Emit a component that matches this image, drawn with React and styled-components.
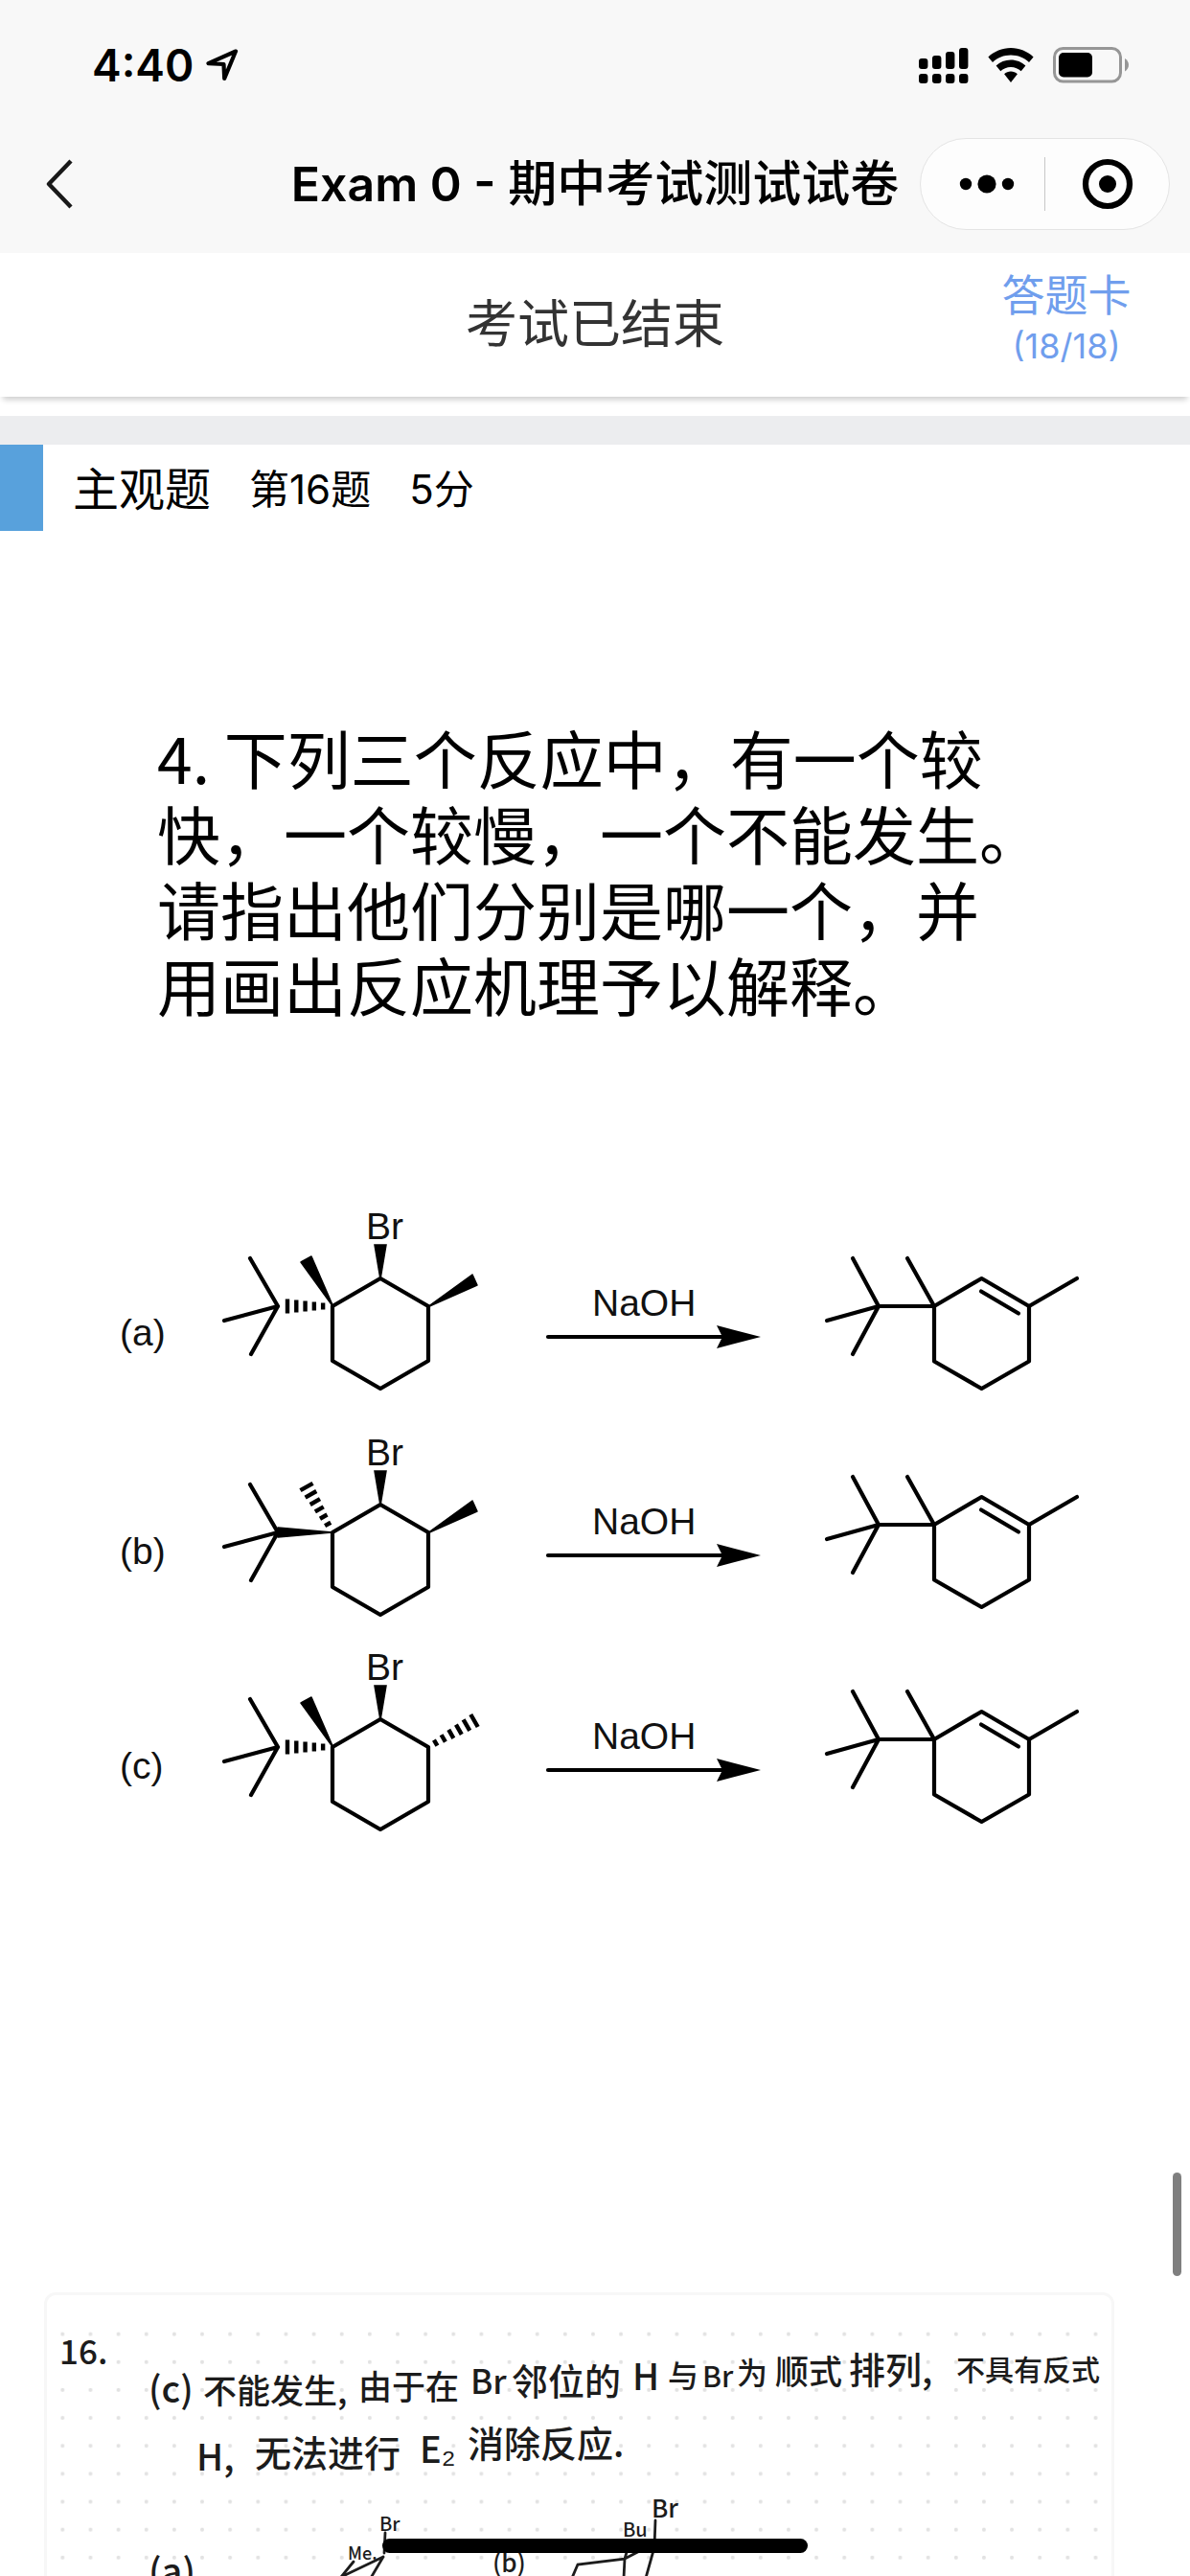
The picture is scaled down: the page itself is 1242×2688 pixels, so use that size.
import React from "react";
import styled, { createGlobalStyle } from "styled-components";

const GlobalStyle = createGlobalStyle`
  *, *::before, *::after { box-sizing: border-box; }
  body { margin: 0; background: #fff; }
  button { border: 0; padding: 0; background: none; font: inherit; color: inherit; cursor: pointer; }
  svg { display: block; }
`;

const Screen = styled.div`
  height: 100vh;
  display: flex;
  flex-direction: column;
  overflow: hidden;
  background: #fff;
  color: #000;
  font-family: Inter, "Noto Sans CJK SC", sans-serif;
`;

const TopArea = styled.header`
  flex: none;
  background: #f8f8f8;
`;

const StatusBar = styled.div`
  height: 120px;
  padding: 16px 63px 0 96px;
  display: flex;
  align-items: center;
  justify-content: space-between;
`;

const StatusGroup = styled.div`
  display: flex;
  align-items: center;
  gap: ${(p) => p.$gap}px;
`;

const Clock = styled.time`
  font-size: 46px;
  line-height: 56px;
  font-weight: 600;
`;

const NavBar = styled.nav`
  height: 144px;
  padding: 0 21px 0 48px;
  display: grid;
  grid-template-columns: 234px 1fr 261px;
  align-items: center;
`;

const BackButton = styled.button`
  width: 28px;
  height: 52px;
`;

const Title = styled.h1`
  margin: 0;
  font-size: 50px;
  line-height: 72px;
  font-weight: 600;
  text-align: center;
  white-space: nowrap;
  justify-self: center;
`;

const TitleName = styled.span`
  font-size: 51px;
  font-weight: 500;
`;

const Capsule = styled.div`
  height: 96px;
  display: flex;
  align-items: center;
  border: 1px solid #e4e4e4;
  border-radius: 48px;
  background: #fdfdfd;
`;

const CapsuleButton = styled.button`
  flex: 1 1 50%;
  display: flex;
  justify-content: center;

  &:first-child { padding-left: 8px; }
`;

const CapsuleDivider = styled.span`
  flex: none;
  width: 1px;
  height: 56px;
  background: #c8c8c8;
`;

const ExamBar = styled.section`
  flex: none;
  height: 150px;
  padding: 0 36px;
  display: grid;
  grid-template-columns: 1fr auto 1fr;
  align-items: center;
  background: #fff;
  box-shadow: 0 6px 6px -3px rgba(0, 0, 0, 0.2);
`;

const ExamState = styled.p`
  grid-column: 2;
  margin: 0;
  color: #333;
  font-size: 54px;
  line-height: 72px;
`;

const AnswerSheet = styled.button`
  justify-self: end;
  align-self: start;
  width: 186px;
  padding-top: 17px;
  display: flex;
  flex-direction: column;
  align-items: center;
  color: #709eed;
`;

const SheetLabel = styled.span`
  font-size: 45px;
  line-height: 56px;
`;

const SheetCount = styled.span`
  font-size: 36px;
  line-height: 48px;
`;

const Scroller = styled.main`
  flex: 1;
  min-height: 0;
  overflow: hidden;
  padding-top: 20px;
`;

const SectionGap = styled.div`
  height: 30px;
  background: #ecedef;
`;

const QuestionHead = styled.div`
  height: 90px;
  display: flex;
  align-items: center;
  border-left: 45px solid #58a1dc;
  padding: 4px 0 0 31px;
  gap: 40px;
`;

const Kind = styled.h2`
  margin: 0;
  font-size: 48px;
  line-height: 72px;
  font-weight: 400;
`;

const Meta = styled.span`
  font-size: 42px;
  line-height: 72px;
`;

const Prompt = styled.p`
  margin: 0;
  padding: 196px 120px 0 164px;
  font-family: "Noto Sans CJK SC", sans-serif;
  font-size: 66px;
  line-height: 79px;
  white-space: nowrap;
`;

const Figure = styled.figure`
  margin: 174px 0 0;

  svg { width: 100%; height: auto; }
`;

const AnswerCard = styled.section`
  margin: 432px 79px 0 46px;
  height: 600px;
  border: 3px solid #f7f7f7;
  border-radius: 12px;
  overflow: hidden;

  svg { width: 100%; height: auto; }
`;

const ScrollThumb = styled.div`
  position: fixed;
  right: 9px;
  top: 2267px;
  width: 9px;
  height: 108px;
  border-radius: 5px;
  background: #7f7f7f;
`;

const HomeIndicator = styled.div`
  position: fixed;
  left: 50%;
  bottom: 24px;
  width: 444px;
  height: 15px;
  margin-left: -222px;
  border-radius: 8px;
  background: #000;
`;

const LocationIcon = () => (
  <svg width="34" height="34" viewBox="0 0 34 34" fill="none" stroke="#000" strokeWidth="4.2" strokeLinejoin="round" aria-hidden="true">
    <path d="M31 2.5 L2.5 15.2 L18.5 16 L19.2 31 Z" />
  </svg>
);

const SignalIcon = () => (
  <svg width="52" height="37" viewBox="0 0 52 37" aria-hidden="true">
    {[11, 8, 4, 0].map((top, i) => (
      <g key={top}>
        <rect x={i * 14} y={top} width="9.4" height={22 - top} rx="3" />
        <rect x={i * 14} y="27" width="9.4" height="10" rx="3" />
      </g>
    ))}
  </svg>
);

const WifiIcon = () => (
  <svg width="48" height="36" viewBox="0 0 48 36" aria-hidden="true">
    <path d="M24 0 C33 0 41.500 3.600 47.600 9.400 L43 15 C38 10.300 31.300 7.600 24 7.600 C16.700 7.600 10 10.300 5 15 L.4 9.400 C6.500 3.600 15 0 24 0Z" />
    <path d="M24 12.500 C29.900 12.500 35.300 14.800 39.400 18.600 L34.700 24.200 C31.900 21.500 28.100 19.900 24 19.900 C19.900 19.900 16.100 21.500 13.300 24.200 L8.600 18.600 C12.700 14.800 18.100 12.500 24 12.500Z" />
    <path d="M24 24.600 C26.600 24.600 29 25.600 30.900 27.300 L24 36 L17.100 27.300 C19 25.600 21.400 24.600 24 24.600Z" />
  </svg>
);

const BatteryIcon = () => (
  <svg width="80" height="38" viewBox="0 0 80 38" aria-hidden="true">
    <rect x="1.500" y="1.500" width="69" height="34.500" rx="9" fill="none" stroke="#969696" strokeWidth="3" />
    <rect x="6" y="6" width="35" height="25.500" rx="5" />
    <path d="M75 12 C77.500 13.500 79 16 79 18.800 C79 21.500 77.500 24 75 25.500Z" fill="#969696" />
  </svg>
);

const BackIcon = () => (
  <svg width="28" height="52" viewBox="0 0 28 52" fill="none" stroke="#191919" strokeWidth="4.400" strokeLinejoin="round" aria-hidden="true">
    <path d="M26 2 L3 26 L26 50" />
  </svg>
);

const MoreIcon = () => (
  <svg width="58" height="20" viewBox="0 0 58 20" aria-hidden="true">
    <circle cx="7" cy="10" r="6.200" />
    <circle cx="29" cy="10" r="9.600" />
    <circle cx="51" cy="10" r="6.200" />
  </svg>
);

const TargetIcon = () => (
  <svg width="54" height="54" viewBox="0 0 54 54" aria-hidden="true">
    <circle cx="27" cy="27" r="23" fill="none" stroke="#000" strokeWidth="6.200" />
    <circle cx="27" cy="27" r="9" />
  </svg>
);

const Caption = styled.text`
  fill: #111;
  stroke: none;
  font-family: "Liberation Sans", Arial, sans-serif;
  font-size: 39px;
`;

/* Hashed bond: short bars across the line from the stereocentre outwards. */
const Hashed = ({ from, to, count, start, near, far }) => {
  const dx = to[0] - from[0];
  const dy = to[1] - from[1];
  const len = Math.hypot(dx, dy);
  const nx = -dy / len;
  const ny = dx / len;
  const bars = Array.from({ length: count }, (_, i) => {
    const k = i / (count - 1);
    const t = start + (1 - start) * k;
    const h = near + (far - near) * k;
    const x = from[0] + dx * t;
    const y = from[1] + dy * t;
    return `M${x - nx * h} ${y - ny * h}L${x + nx * h} ${y + ny * h}`;
  });
  return <path d={bars.join("")} strokeLinecap="butt" strokeWidth="4.400" />;
};

const Reactant = ({ y, butyl, methyl, tail }) => (
  <g transform={`translate(0 ${y})`}>
    <Caption x="382" y="33">Br</Caption>
    <path d="M397 74 L447 103 V160 L397 189 L347 160 V103 Z" />
    <path d="M397 75 L391 39 H403 Z" fill="#000" strokeWidth="1.500" strokeLinejoin="miter" />
    <path d="M290 103 L261 53 M290 103 L234 118 M290 103 L262 153" />
    {butyl === "hash" ? (
      <Hashed from={[347, 103]} to={[300, 103]} count={5} start={0.21} near={3.500} far={7.500} />
    ) : (
      <path d="M347 103 L290 98 V108 Z" fill="#000" strokeWidth="1.500" />
    )}
    {methyl === "hash" ? (
      <Hashed from={[347, 103]} to={[320, 55.500]} count={6} start={0.18} near={3.500} far={7.500} />
    ) : (
      <path d="M348 104 L314 57 L325 51 Z" fill="#000" strokeWidth="1.500" />
    )}
    {tail === "hash" ? (
      <Hashed from={[447, 103]} to={[495, 75.500]} count={6} start={0.16} near={3.500} far={7.500} />
    ) : (
      <path d="M446 104 L493 70 L498 81 Z" fill="#000" strokeWidth="1.500" />
    )}
  </g>
);

const ArrowAndProduct = ({ y, name }) => (
  <g transform={`translate(0 ${y})`}>
    <Caption x="125" y="144">({name})</Caption>
    <Caption x="618" y="113">NaOH</Caption>
    <path d="M572 135 H756" />
    <path d="M748 123 L794 135 L748 147 L754 135 Z" fill="#000" stroke="none" />
    <path d="M917 103 L890 53 M917 103 L863 118 M917 103 L890 153 M917 103 H975 L947 53" />
    <path d="M975 103 L1024.500 74 L1074 103 V160.500 L1024.500 189 L975 160.500 Z" />
    <path d="M1074 103 L1124 74 M1024 87.500 L1063 110.500" />
  </g>
);

const Reactions = () => (
  <svg
    viewBox="0 -20 1242 720"
    fill="none"
    stroke="#000"
    strokeWidth="4.200"
    strokeLinecap="round"
    strokeLinejoin="round"
    role="img"
    aria-label="反应 (a) (b) (c)"
  >
    <Reactant y={0} butyl="hash" methyl="wedge" tail="wedge" />
    <Reactant y={236} butyl="wedge" methyl="hash" tail="wedge" />
    <Reactant y={460} butyl="hash" methyl="wedge" tail="hash" />
    <ArrowAndProduct y={0} name="a" />
    <ArrowAndProduct y={228} name="b" />
    <ArrowAndProduct y={452} name="c" />
  </svg>
);

const Ink = styled.text`
  fill: #1c1c1c;
  stroke: none;
  font-family: "Noto Sans CJK SC", sans-serif;
  font-size: ${(p) => p.$size}px;
  font-weight: 500;
`;

/* Words of the handwritten answer: left edge, baseline, size, text. */
const words = [
  [62, 2467, 35, "16."],
  [155, 2507, 38, "(c)"],
  [212, 2508, 35, "不能发生,"],
  [374, 2504, 35, "由于在"],
  [491, 2498, 35, "Br"],
  [534, 2499, 38, "邻位的"],
  [660, 2494, 38, "H"],
  [697, 2491, 32, "与"],
  [733, 2491, 30, "Br"],
  [769, 2488, 32, "为"],
  [809, 2488, 35, "顺式"],
  [886, 2487, 38, "排列,"],
  [998, 2484, 30, "不具有反式"],
  [205, 2578, 38, "H,"],
  [266, 2574, 38, "无法进行"],
  [438, 2570, 38, "E₂"],
  [488, 2564, 38, "消除反应."],
  [396, 2641, 20, "Br"],
  [363, 2671, 18, "Me."],
  [155, 2697, 38, "(a)"],
  [514, 2684, 26, "(b)"],
  [680, 2627, 26, "Br"],
  [650, 2647, 20, "Bu"],
];

const Handwriting = () => (
  <svg viewBox="49 2395 1111 594" fill="none" stroke="#1c1c1c" strokeWidth="2.800" strokeLinecap="round" role="img" aria-label="手写答案">
    <defs>
      <pattern id="dots" x="50.800" y="2421.100" width="29.140" height="29.150" patternUnits="userSpaceOnUse">
        <circle cx="14.500" cy="14.500" r="2" fill="#e2e2e2" stroke="none" />
      </pattern>
    </defs>
    <rect x="51" y="2422" width="1100" height="580" fill="url(#dots)" stroke="none" />
    {words.map(([x, y, size, text]) => (
      <Ink key={`${x}-${y}`} x={x} y={y} $size={size}>{text}</Ink>
    ))}
    <path d="M402 2643 L401 2664 M400 2668 L356 2689 M400 2668 L387 2690 M369 2673 L356 2689" />
    <path d="M597 2690 L603 2676 L652 2670 L651 2690 M652 2670 L655 2660 M652 2670 L683 2654 M684 2630 L683 2658 L674 2690" />
  </svg>
);

export default function App() {
  return (
    <>
      <GlobalStyle />
      <Screen>
        <TopArea>
          <StatusBar>
            <StatusGroup $gap={13}>
              <Clock>4:40</Clock>
              <LocationIcon />
            </StatusGroup>
            <StatusGroup $gap={20}>
              <SignalIcon />
              <WifiIcon />
              <BatteryIcon />
            </StatusGroup>
          </StatusBar>
          <NavBar>
            <BackButton aria-label="返回"><BackIcon /></BackButton>
            <Title>Exam 0 - <TitleName>期中考试测试试卷</TitleName></Title>
            <Capsule>
              <CapsuleButton aria-label="更多"><MoreIcon /></CapsuleButton>
              <CapsuleDivider />
              <CapsuleButton aria-label="关闭"><TargetIcon /></CapsuleButton>
            </Capsule>
          </NavBar>
        </TopArea>
        <ExamBar>
          <ExamState>考试已结束</ExamState>
          <AnswerSheet>
            <SheetLabel>答题卡</SheetLabel>
            <SheetCount>(18/18)</SheetCount>
          </AnswerSheet>
        </ExamBar>
        <Scroller>
          <SectionGap />
          <QuestionHead>
            <Kind>主观题</Kind>
            <Meta>第16题</Meta>
            <Meta>5分</Meta>
          </QuestionHead>
          <Prompt>
            4. 下列三个反应中，有一个较<br />
            快，一个较慢，一个不能发生。<br />
            请指出他们分别是哪一个，并<br />
            用画出反应机理予以解释。
          </Prompt>
          <Figure><Reactions /></Figure>
          <AnswerCard><Handwriting /></AnswerCard>
        </Scroller>
      </Screen>
      <ScrollThumb />
      <HomeIndicator />
    </>
  );
}
